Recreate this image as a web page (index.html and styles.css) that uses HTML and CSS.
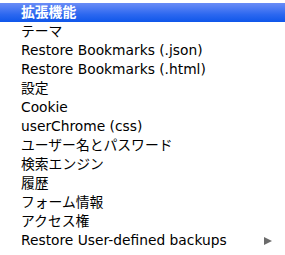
FILE: index.html
```html
<!DOCTYPE html>
<html lang="ja">
<head>
  <meta charset="UTF-8"/>
  <title>Menu</title>
  <link rel="stylesheet" href="styles.css">
</head>
<body>
  <ul class="menu">
    <li class="item active">拡張機能</li>
    <li class="item">テーマ</li>
    <li class="item">Restore Bookmarks (.json)</li>
    <li class="item">Restore Bookmarks (.html)</li>
    <li class="item">設定</li>
    <li class="item">Cookie</li>
    <li class="item">userChrome (css)</li>
    <li class="item">ユーザー名とパスワード</li>
    <li class="item">検索エンジン</li>
    <li class="item">履歴</li>
    <li class="item">フォーム情報</li>
    <li class="item">アクセス権</li>
    <li class="item sub">Restore User-defined backups <span class="arrow"></span></li>
  </ul>
</body>
</html>
```

FILE: styles.css
```css
* { box-sizing: border-box; margin: 0; padding: 0; }

body {
  background: #fff;
  font-family: "DejaVu Sans", "Noto Sans CJK JP", sans-serif;
  font-size: 13.8px;
  color: #000;
}

.menu {
  list-style: none;
  padding-top: 3px;
}

.item {
  height: 19px;
  line-height: 19px;
  padding-left: 21px;
  display: flex;
  align-items: center;
}

.active {
  color: #fff;
  font-weight: 600;
  background: linear-gradient(#6a8cf6, #2c68f0 60%, #0f56ea);
}

.sub {
  padding-right: 13px;
}

.arrow {
  margin-left: auto;
  width: 0;
  height: 0;
  border-top: 4.5px solid transparent;
  border-bottom: 4.5px solid transparent;
  border-left: 8px solid #6b6b6b;
}
```
